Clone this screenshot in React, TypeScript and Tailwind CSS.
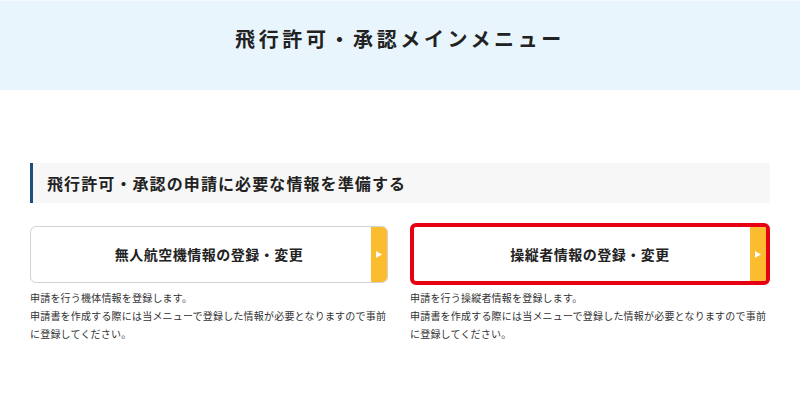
import React from "react";

const font = { fontFamily: '"Noto Sans CJK JP", "Noto Sans", sans-serif' };

type MenuItem = {
  label: string;
  desc: string;
  active?: boolean;
};

const items: MenuItem[] = [
  {
    label: "無人航空機情報の登録・変更",
    desc: "申請を行う機体情報を登録します。",
  },
  {
    label: "操縦者情報の登録・変更",
    desc: "申請を行う操縦者情報を登録します。",
    active: true,
  },
];

function MenuCard({ item }: { item: MenuItem }) {
  return (
    <div className="flex flex-col">
      <div className="flex h-[62px] items-center">
        <button
          className={
            item.active
              ? "relative flex h-[62px] w-full items-center justify-center overflow-hidden rounded-[6px] border-[4px] border-[#e60012] bg-white"
              : "relative flex h-[57px] w-full items-center justify-center overflow-hidden rounded-[6px] border border-[#d2d2d2] bg-white"
          }
        >
          <span className="text-[14px] font-bold tracking-[0.5px] text-[#222]">{item.label}</span>
          <span className="absolute right-0 top-0 flex h-full w-[16px] items-center justify-center bg-[#fbbc2d]">
            <svg width="6" height="7" viewBox="0 0 6 7">
              <path d="M0 0 L6 3.5 L0 7 Z" fill="#fff" />
            </svg>
          </span>
        </button>
      </div>
      <p className="mt-[4px] text-[10px] leading-[18px] tracking-[0.2px] text-[#333]">
        {item.desc}
        <br />
        申請書を作成する際には当メニューで登録した情報が必要となりますので事前に登録してください。
      </p>
    </div>
  );
}

export default function App() {
  return (
    <main className="min-h-screen w-[800px] bg-white" style={font}>
      <header className="flex h-[90px] items-start justify-center border-t border-[#f3f9fd] bg-[#e8f5fd] pt-[23px]">
        <h1 className="text-[20px] font-bold leading-[30px] tracking-[3.6px] text-[#222]">
          飛行許可・承認メインメニュー
        </h1>
      </header>

      <section className="px-[30px] pt-[73px]">
        <h2 className="flex h-[40px] items-center border-l-[3px] border-[#1d4e7e] bg-[#f7f7f7] pl-[14px] text-[16px] font-bold tracking-[1.1px] text-[#222]">
          飛行許可・承認の申請に必要な情報を準備する
        </h2>

        <div className="mt-[20px] grid grid-cols-[358px_360px] gap-[22px]">
          {items.map((item) => (
            <MenuCard key={item.label} item={item} />
          ))}
        </div>
      </section>
    </main>
  );
}
